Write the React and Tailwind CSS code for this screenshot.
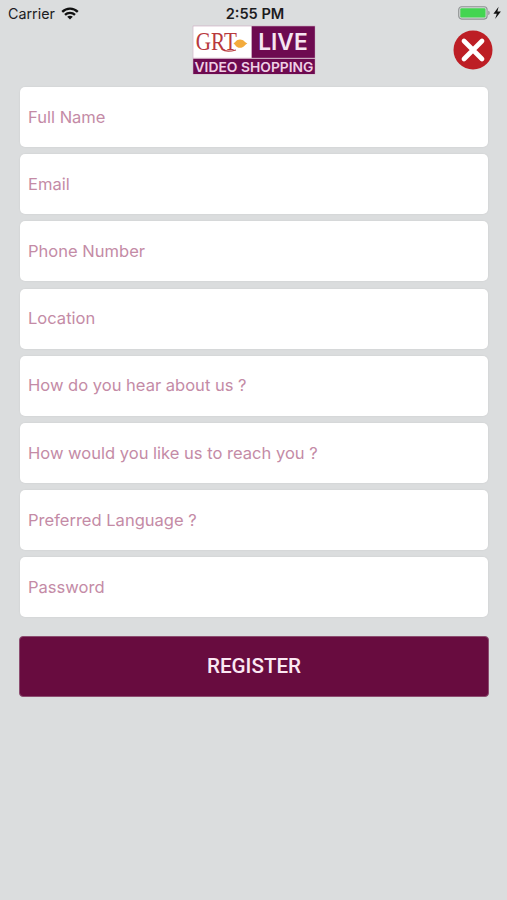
const fields = [
  'Full Name',
  'Email',
  'Phone Number',
  'Location',
  'How do you hear about us ?',
  'How would you like us to reach you ?',
  'Preferred Language ?',
  'Password',
];

function WifiIcon() {
  return (
    <svg className="h-[13px] w-[18px]" viewBox="0 0 18 13" fill="none" stroke="#111" strokeWidth="2.3">
      <path d="M1.2 4.9C5.6 .5 12.4 .5 16.8 4.9" />
      <path d="M4 7.9c2.8-2.7 7.2-2.7 10 0" />
      <path d="M9 12.6 6.2 9.8c1.6-1.5 4-1.5 5.6 0z" fill="#111" stroke="none" />
    </svg>
  );
}

function BatteryIcon() {
  return (
    <svg className="-mt-px h-[14px] w-[44px]" viewBox="0 0 44 14">
      <rect x=".7" y=".7" width="28.4" height="12.4" rx="3" fill="#d5d8d8" stroke="#8f9393" strokeWidth="1.1" />
      <rect x="2.3" y="2.3" width="25.2" height="9.2" rx="1.2" fill="#43d551" />
      <path d="M30.4 4.8c1.6.5 1.6 3.7 0 4.2z" fill="#858989" />
      <path d="M40.6.8 35.4 7.8h3.4l-1.700 5.200 5.800-7.400h-3.500z" fill="#111" />
    </svg>
  );
}

function Logo() {
  return (
    <svg className="h-[50px] w-[124px]" viewBox="0 0 124 50">
      <rect x=".8" y=".7" width="122.4" height="48.6" fill="#c9a5bd" />
      <rect x="1.3" y="1.3" width="57.7" height="31.5" fill="#fff" />
      <rect x="60" y="1.3" width="62.8" height="31.5" fill="#6d0a50" />
      <rect x="1.3" y="34" width="121.5" height="15" fill="#6d0a50" />
      <text x="3.8" y="25" fontSize="25" textLength="41" lengthAdjust="spacingAndGlyphs" fill="#b8393d" className="font-['Liberation_Serif',serif]">GRT</text>
      <path d="M30 24.6c3 2 8 2 14 .4" fill="none" stroke="#b8393d" strokeWidth="1.2" />
      <path d="M41.500 18.500c1.800-.6 2.500-3.900 6.500-3.900s5 3.300 7.400 3.900c-2.400.8-3.400 4.300-7.400 4.300s-4.700-3.500-6.500-4.300z" fill="#f3ab3c" />
      <text x="66.2" y="25.1" fontSize="22.5" fontWeight="600" textLength="49.5" lengthAdjust="spacingAndGlyphs" fill="#f6e4f1" className="font-['Inter',sans-serif]">LIVE</text>
      <text x="2.5" y="46.6" fontSize="13.6" fontWeight="600" textLength="119" lengthAdjust="spacingAndGlyphs" fill="#efcfe5" className="font-['Inter',sans-serif]">VIDEO SHOPPING</text>
    </svg>
  );
}

export default function App() {
  return (
    <div className="flex h-[900px] w-[507px] flex-col overflow-hidden bg-[#dbddde] font-['Inter',sans-serif]">
      <div className="grid h-[25px] shrink-0 grid-cols-[1fr_auto_1fr] items-center pt-[2px] pl-2 pr-[5px] text-[#1c1c1e]">
        <div className="flex items-center gap-[6px]">
          <span className="text-[14.3px] leading-4">Carrier</span>
          <WifiIcon />
        </div>
        <span className="text-[14.6px] leading-4 font-semibold">2:55 PM</span>
        <div className="flex justify-end"><BatteryIcon /></div>
      </div>
      <header className="grid h-[62px] shrink-0 grid-cols-[1fr_auto_1fr] items-start pr-[14px]">
        <span />
        <div className="ml-[14px]"><Logo /></div>
        <button aria-label="Close" className="mt-[5px] justify-self-end">
          <svg className="size-10" viewBox="0 0 40 40">
            <circle cx="20" cy="20" r="19.5" fill="#bd1e25" />
            <path d="M11 11 29 29M29 11 11 29" stroke="#fff" strokeWidth="4.7" strokeLinecap="round" />
          </svg>
        </button>
      </header>
      <form className="flex flex-col px-5">
        <div className="flex flex-col gap-[7.2px]">
          {fields.map((label) => (
            <div key={label} className="flex h-[60px] w-[468px] items-center rounded-[5px] bg-white px-2 text-[16.55px] text-[#c48ba6] shadow-[0_0_2px_rgba(0,0,0,0.08)]">
              {label}
            </div>
          ))}
        </div>
        <button type="button" className="mt-[19px] -ml-px h-[61px] w-[470px] rounded-[4px] border border-[#8c4d70] bg-[#680c3f] font-['Roboto',sans-serif] text-[20.6px] font-medium text-[#fbe8f3]">
          REGISTER
        </button>
      </form>
    </div>
  );
}
